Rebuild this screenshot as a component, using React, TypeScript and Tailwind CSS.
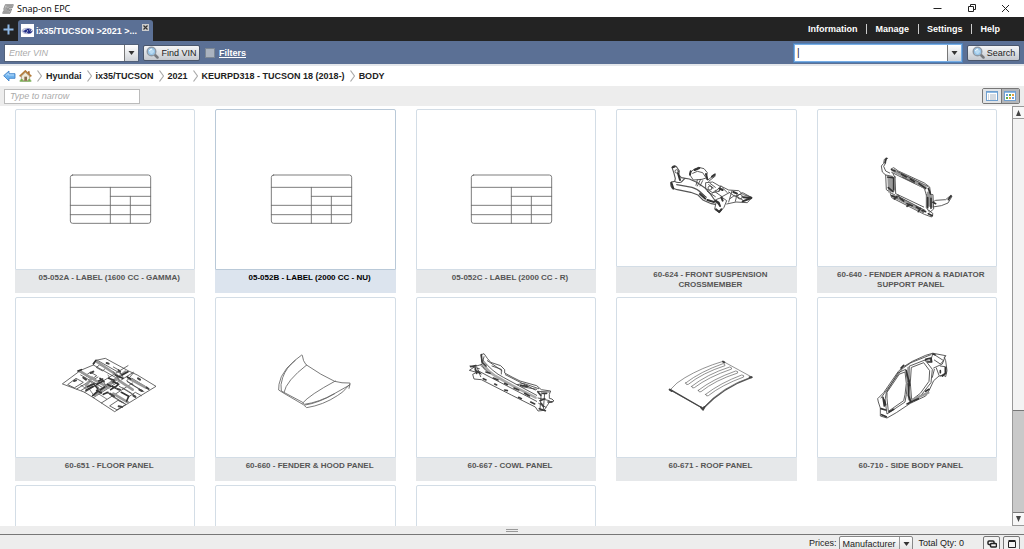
import { Fragment, useId, type ReactNode } from 'react';

function Caret() {
  return (
    <svg width="7" height="4" viewBox="0 0 7 4" aria-hidden="true">
      <path d="M0.5 0h6L3.5 4z" fill="#333" />
    </svg>
  );
}

function Magnifier() {
  return (
    <svg width="13" height="13" viewBox="0 0 26 26" aria-hidden="true">
      <path d="M17 17l6 6" stroke="#77797d" strokeWidth="5" strokeLinecap="round" />
      <circle cx="11" cy="11" r="8.5" fill="#b9dbf3" stroke="#8d97a3" strokeWidth="3" />
      <circle cx="11" cy="11" r="6" fill="none" stroke="#7db4df" strokeWidth="1.5" />
      <path d="M7 10q1-4 5-4" stroke="#fff" strokeWidth="2" fill="none" />
    </svg>
  );
}

function HyundaiMark() {
  return (
    <svg width="13" height="13" viewBox="0 0 39 39" className="shrink-0" aria-hidden="true">
      <rect width="39" height="39" fill="#fff" />
      <ellipse cx="19" cy="21" rx="16" ry="8" fill="#e3e7f0" stroke="#8b94bd" strokeWidth="2" />
      <path d="M11 25q6-2 8-9h5q-2 4-1 6h3q2-4 4-6M7 22q6 0 9-5M18 26q2-4 8-4l-3 5q6 0 9-5" fill="none" stroke="#1f2a86" strokeWidth="3.6" />
    </svg>
  );
}

function AppMark() {
  return (
    <svg width="12" height="10" viewBox="0 0 36 30" aria-hidden="true">
      <path d="M10 2h24l-3 9H20l-2 4h11l-5 13H2l3-8h11l2-4H5z" fill="#ccc" stroke="#666" strokeWidth="2" />
      <path d="M13 6h17M10 12h7M19 19h6M6 24h17" stroke="#555" strokeWidth="2" />
    </svg>
  );
}

function BackArrow() {
  return (
    <svg width="13" height="12" viewBox="0 0 39 36" aria-hidden="true">
      <path d="M2 17L18 3v8h18v14H18v8z" fill="#6fb3ee" stroke="#3f7fc6" strokeWidth="2.5" strokeLinejoin="round" />
      <path d="M8 17l8-7v5h17" stroke="#b9dcfa" strokeWidth="3" fill="none" />
    </svg>
  );
}

function HomeIcon() {
  return (
    <svg width="13" height="12" viewBox="0 0 39 36" aria-hidden="true">
      <path d="M2 33h35" stroke="#6aa544" strokeWidth="4" />
      <path d="M27 4h5v9h-5z" fill="#a0642c" />
      <path d="M7 18L19 7l13 11v14H7z" fill="#f0ead8" stroke="#8c7a5e" strokeWidth="2" />
      <path d="M2 19L19 3l18 16" fill="none" stroke="#b27a38" strokeWidth="5" />
      <path d="M16 20h8v12h-8z" fill="#8a6a48" />
      <path d="M5 27h6v6H5zM28 27h6v6h-6z" fill="#74b04a" />
    </svg>
  );
}

function Chevron() {
  return (
    <svg width="5" height="12" viewBox="0 0 5 12" aria-hidden="true">
      <path d="M0.5 0.5l4 5.5-4 5.5" fill="none" stroke="#aaa" strokeWidth="1.2" />
    </svg>
  );
}

function Figure({ viewBox, children }: { viewBox: string; children: ReactNode }) {
  return (
    <svg viewBox={viewBox} width="178" height="150" fill="none" stroke="#444" strokeWidth="2.6" strokeLinejoin="round" strokeLinecap="round" aria-hidden="true">
      {children}
    </svg>
  );
}

function LabelFigure() {
  return (
    <Figure viewBox="48 -165 534 450">
      <g stroke="#6a6a6a">
        <rect x="211" y="30" width="241" height="145" rx="7" />
        <path d="M211 67h241M331 94h121M211 121h241M211 149h241M331 67v108M391 94v81" />
      </g>
    </Figure>
  );
}

function CrossmemberFigure() {
  return (
    <Figure viewBox="-99 -120 534 450">
      <path d="M66 52q6-8 14-1l8 12-2 12 8 8 24 4 22 10 24 16 18 20 14 20 12 12M66 52l6 18 4 16-2 8-10 2q-4 10 2 18l16 5 40 8 22 8 16 16 24 10 12 2M74 94q8 6 20 2l10-10M80 104q20 4 46 8 16 4 30 18l10 10" stroke="#555" strokeWidth="3.4" />
      <path d="M120 68l12-10 14-6 16 4 10 12-4 16-12 4-26 2-8-12zM128 70l14-6 16 4 8 12M142 90l-4 16M152 88l-10 20M158 92l-8 16M174 90l22-18M176 94l20-16M168 98l20-2 24 14-4 14-20 4-20-12zM176 104l14 10M212 108l24 12 30 2 14 12 26 8-14 16-34-2-28 6M212 108l-16 18 20 14 22-12M206 122l12-8 14 14M236 126l20 14 22-12 26 14M240 146l14-10 24 14M200 148l16-6 14 10-8 20-14 16-14-10 4-20zM262 130l-6 24M150 128l20 14M180 100l16 12M246 122l-10 34M172 124l24 16M186 130l12-10" />
      <path d="M68 52l6-2M84 70l6 20M64 98l6 18M134 60l14-6M122 64l-2 10M168 72l4 16M150 132l16 14M172 150l20 6M196 152l10 6 4 10M198 178l10 8 6-8M280 142l24 2-26 10M208 116l10 4M214 142l4 10M250 126l10 4M186 80l8-6" stroke="#333" strokeWidth="6" />
      <circle cx="180" cy="114" r="6" />
      <circle cx="270" cy="140" r="7" />
      <circle cx="80" cy="64" r="5" />
    </Figure>
  );
}

function RadiatorSupportFigure() {
  return (
    <Figure viewBox="-127 -105 534 450">
      <path d="M82 40l-10 3-2 12-7 8 3 18 10 9 20 4M76 54l-6 10 6 14 12 6M92 72l8-4 14 10 78 36 16 12 4 28M94 82l20 10 78 38 6 20M76 90l2 44 14 10 12 6M104 94l2 50M90 146l4 12 98 50 22 8 4-10-12-10M106 146l84 40M198 150v38l10 14 12-10-2-42zM216 172l10-6 30-2 12-10 7 0-12 20-20 8-26 4" />
      <path d="M98 76l16 8 40 20 44 26M86 96l2 46M96 96l2 44M94 152l24 10 30 16 24 12 20 12M204 140l2 44M212 150v36" stroke="#999" strokeWidth="10" strokeLinecap="butt" />
      <path d="M78 40l-4 13M94 74l10 4M82 96l16 2M84 128l14 12M100 100v34M94 152l16 6M120 160l10 8M140 176l16 6M168 186l10 6M186 196l10 4M124 88l14 8M150 102l12 8M176 116l20 14M202 158v30M212 160v30M204 206l12 6M272 152l-8 12M110 154l-8 8M148 178l-8 6M180 190l-6 10M204 130l6 16M218 172l8 4" stroke="#333" strokeWidth="5" />
      <path d="M112 80l90 44M110 152l84 44M126 96l36 18M114 150l6 12M176 188l12 14M98 86l6 12" />
    </Figure>
  );
}

function FloorFigure() {
  return (
    <Figure viewBox="-102 -141 534 450">
      <path d="M38 116L92 76 130 60 138 46 166 40 236 78 262 90 318 124 194 200 130 158 104 142zM54 118l24-18 22 12-26 16zM84 78l46 26 14-8M92 90l70 40 40-26M130 60l68 38M142 46l74 42M104 142l130-80M130 158l120-76M154 174l94-60M80 132l30-18M94 136l32-20M170 142l52 32M180 182l24-16 24 12-26 16zM208 124l50 30M232 110l50 30M246 100l46 28M238 154l18-12 18 10M250 84l-20 24 20 12M122 82l18 10-14 10-18-10zM150 60l18 8-10 10-18-10zM190 66l18 10M270 118l20 10" strokeWidth="2.4" />
      <path d="M92 80l44 26 40 22M140 50l60 40M226 80l-60 50M236 100l52 28M136 150l56-42M144 140l70-50M190 146l44 26M206 106l42 28M126 98l-18 24" stroke="#999" strokeWidth="8" />
      <path d="M84 78l10-4M130 56l8-10M196 90l22 10M108 136l22-12M140 118l20-10M112 126l20-10M146 108l12-6M128 152l16-14M152 134l12-8M140 136l14 8M190 110l16 8-8 6M160 148l14-6M182 134l12-8M214 142l22 12-6 14M176 100l16 6M134 120l10 12M216 90l18-10M150 100l12 10M186 124l12 6M172 118l10 6M232 96l10 6" stroke="#333" strokeWidth="5" />
      <path d="M72 108l6-2M122 84l8-4M202 132l8 2M250 152l6 4M170 54l6 2M206 76l4 4M264 100l6 4M290 128l6 4M206 184l10 2M100 98l8 6M180 146l12 8M268 134l8 4" strokeWidth="6" />
      <path d="M118 132l14 20M136 114l18 26M156 102l14 24M174 90l16 26M190 80l18 26M206 74l14 24M92 120l18 12M118 108l16 10M148 148l22 14M186 154l30 18M218 128l26 16M244 118l26 16" strokeWidth="2" />
    </Figure>
  );
}

function HoodFigure() {
  return (
    <Figure viewBox="-131 -141 534 450">
      <g stroke="#666">
        <path d="M122 31l-18 14q-30 24-42 50-10 26-8 40l16 10 58 34 10 9q50-8 92-36 20-12 26-22l11-12q3-6-1-4-22 1-44-5-40-18-86-50-9-10-11-27z" />
        <path d="M104 46q-28 22-38 52-8 22-4 40l64 34 5 6q44-6 90-32l46-26M70 142q6-34 68-82M126 174q20-24 98-66M134 180q40-6 88-34M268 118l-3 12" />
      </g>
    </Figure>
  );
}

function CowlFigure() {
  return (
    <Figure viewBox="-115 -126 534 450">
      <path d="M78 44l8-3 10 14 10 12 30 10 12 12v10l22 12 24 12 50 14 14 12 28 4-4 10v12l8 2 6 6-14 4-8 12-8 12-18 2-8-12-72-36-90-46-22-2-4-14 12-6-22-6 18-12 20-6z" />
      <path d="M82 60q30 36 62 52l100 54M76 76q20 22 50 36l116 62M68 92l30 16 146 76M86 50l-6 24 8 14 20 12M96 62l44 30M44 78l28 8M58 90l20 12M150 104l90 46M186 134l18-4 46 16M200 140l44 8M246 154l36 2M248 174l34 8M250 190l22 12M258 158l-4 50M268 160l-4 48M66 84l10 26M110 78l28 10v14" />
      <path d="M84 74q14 20 36 34l50 28 70 36" stroke="#aaa" strokeWidth="8" />
      <path d="M78 44l2 22 12 12M46 80l16-3M64 94l10 6M92 96l12 4M114 114l14 6M148 130l8 4M176 144l14 6M208 160l14 8M84 116l8 4M118 132l6 3M148 150l8 2M190 172l8 4M226 186l12 6M196 136l20 3M248 156l8 10M254 182l14-6M278 186l12 0M252 206l18 6M262 160l12 0M60 86l4 14M258 190l6 10" stroke="#3c3c3c" strokeWidth="5" />
    </Figure>
  );
}

function RoofFigure() {
  return (
    <Figure viewBox="-114 -156 534 450">
      <g stroke="#6a6a6a" strokeWidth="2.2">
        <path d="M46 119q18-22 44-36 50-30 114-49l86 47q-88 28-146 93z" />
        <path d="M92 99q44-34 112-58 6 0 6 6-68 22-110 56-6 4-8-4zM110 109q46-36 114-58 6 0 6 6-70 24-112 56-6 4-8-4zM130 121q44-34 112-58 8 0 6 6-68 22-110 56-6 4-8-4zM152 133q44-34 108-58 8 0 6 6-66 24-106 56-6 4-8-4z" />
      </g>
      <path d="M46 119l96 55" stroke="#444" strokeWidth="4" />
      <path d="M146 174q58-62 144-92" stroke="#555" strokeWidth="4" />
      <path d="M44 119l6 4M138 172l6 7 4-8M284 82l6 0M204 35l4 2" strokeWidth="6" />
    </Figure>
  );
}

function SideBodyFigure() {
  return (
    <Figure viewBox="-127 -126 534 450">
      <path d="M216 40l-20 6-40 18-26 16-16 14-44 64-18 18 2 10 6 18 0 24 20 6 28-16 42-28 46-22 10-16 14-30 16-14 14-2 6 4 4-18-4-30-4-10 4-4z" />
      <path d="M118 102l16-6 4 34-4 34-4 18-46 32-4-38 0-18zM114 98l22-10 6 40-4 36-4 22-54 36-6-42 4-22zM154 82l36-14 18 24-2 32-26 36-26 20-4-50zM148 78l46-18 22 28-4 40-30 38-32 22-4-56zM212 44l-60 24-26 18-54 74-10 14M218 40l-8 24-16-2M222 44l28 18-10 10-18-12M254 50l-8 22-26 12M240 78l14 2v20l-14 8M228 84l8 22M222 88l-6 24" />
      <path d="M144 84l2 50v44M150 182l54-24" stroke="#999" strokeWidth="7" />
      <path d="M138 92l8 34-2 40 6 16M68 172l4 26M62 206l14 4M64 224l14 6M196 58l16-4 2 12-12 0M130 76l-8 8M140 192l16-8M72 180l4 14M196 154l10-6M256 82v18l-10 8M240 92l0 6M86 216l14-8M146 120l2 16M218 42l6 2M160 182l14-6" stroke="#333" strokeWidth="5" />
    </Figure>
  );
}

type Part = { title: string; figure: ReactNode; active?: boolean };

const parts: Part[] = [
  { title: '05-052A - LABEL (1600 CC - GAMMA)', figure: <LabelFigure /> },
  { title: '05-052B - LABEL (2000 CC - NU)', figure: <LabelFigure />, active: true },
  { title: '05-052C - LABEL (2000 CC - R)', figure: <LabelFigure /> },
  { title: '60-624 - FRONT SUSPENSION CROSSMEMBER', figure: <CrossmemberFigure /> },
  { title: '60-640 - FENDER APRON & RADIATOR SUPPORT PANEL', figure: <RadiatorSupportFigure /> },
  { title: '60-651 - FLOOR PANEL', figure: <FloorFigure /> },
  { title: '60-660 - FENDER & HOOD PANEL', figure: <HoodFigure /> },
  { title: '60-667 - COWL PANEL', figure: <CowlFigure /> },
  { title: '60-671 - ROOF PANEL', figure: <RoofFigure /> },
  { title: '60-710 - SIDE BODY PANEL', figure: <SideBodyFigure /> },
  { title: '', figure: null },
  { title: '', figure: null },
  { title: '', figure: null },
];

function PartCard({ title, figure, active }: Part) {
  return (
    <button type="button" className="flex h-[184px] flex-col text-center">
      <span className={`flex w-full flex-1 justify-center overflow-hidden rounded-t-xs border bg-white ${active ? 'border-[#b9c9d8]' : 'border-[#d3dde6]'}`}>
        {figure}
      </span>
      <span className={`block min-h-[23px] w-full py-[3px] pr-3 pl-5 text-[8px] leading-[10px] font-bold ${active ? 'bg-[#dce4ee] text-black' : 'bg-[#e6e8ea] text-[#555]'}`}>
        {title}
      </span>
    </button>
  );
}

const crumbs = ['Hyundai', 'ix35/TUCSON', '2021', 'KEURPD318 - TUCSON 18 (2018-)', 'BODY'];
const menu = ['Information', 'Manage', 'Settings', 'Help'];

export default function App() {
  const id = useId();
  return (
    <div className="flex h-screen flex-col overflow-hidden bg-white font-['Liberation_Sans',Arial,sans-serif] text-[9px] leading-3 text-[#222]">
      <header className="flex h-[17px] shrink-0 items-center pr-[14px] pl-[2px]">
        <AppMark />
        <h1 className="ml-[3px] font-['Open_Sans',sans-serif] text-[9px] text-black">Snap-on EPC</h1>
        <div className="ml-auto flex items-center gap-[25px]">
          <button type="button" aria-label="Minimize">
            <svg width="9" height="9" viewBox="0 0 9 9"><path d="M0.5 4.5h8" stroke="#222" /></svg>
          </button>
          <button type="button" aria-label="Restore">
            <svg width="9" height="9" viewBox="0 0 9 9" fill="none" stroke="#222"><path d="M1.5 2.5h5v5h-5zM3.5 2V0.500h5v5H7" /></svg>
          </button>
          <button type="button" aria-label="Close">
            <svg width="9" height="9" viewBox="0 0 9 9"><path d="M1 1l7 7M8 1L1 8" stroke="#222" /></svg>
          </button>
        </div>
      </header>

      <div className="flex h-6 shrink-0 items-center bg-[#232323] pr-6">
        <button type="button" aria-label="New tab" className="ml-[3px] flex w-[15px]">
          <svg width="11" height="11" viewBox="0 0 11 11"><path d="M5.500 0.500v10M0.500 5.500h10" stroke="#8fb9e6" strokeWidth="2" /></svg>
        </button>
        <div className="flex h-[21px] w-[135px] items-center gap-[2px] self-end rounded-t-[3px] bg-[#5b7095] pr-1 pl-[3px] font-bold text-white">
          <HyundaiMark />
          <span className="whitespace-nowrap">ix35/TUCSON &gt;2021 &gt;...</span>
          <button type="button" aria-label="Close tab" className="mt-1 ml-auto flex self-start">
            <svg width="7" height="7" viewBox="0 0 7 7"><rect width="7" height="7" fill="#ccc" /><path d="M1.500 1.500l4 4M5.500 1.500l-4 4" stroke="#333" strokeWidth="1.200" /></svg>
          </button>
        </div>
        <nav className="ml-auto flex items-center font-bold text-white">
          {menu.map((item, i) => (
            <Fragment key={item}>
              {i > 0 && <span className="mr-2 ml-[9px] h-[10px] w-px bg-[#ccc]" />}
              <a href="#">{item}</a>
            </Fragment>
          ))}
        </nav>
      </div>

      <div className="flex h-[23px] shrink-0 items-center bg-[#5b7095] px-1">
        <div className="flex h-[18px] w-[135px] border border-[#52617a] bg-white">
          <input aria-label="Enter VIN" placeholder="Enter VIN" className="min-w-0 flex-1 px-1 italic outline-none placeholder:text-[#aaa]" />
          <button type="button" aria-label="VIN history" className="flex w-[14px] items-center justify-center border-l border-[#777] bg-linear-to-b from-white to-[#cfd3d8]">
            <Caret />
          </button>
        </div>
        <button type="button" className="ml-1 flex h-4 w-[57px] items-center justify-center gap-[2px] rounded-xs border border-[#4a566b] bg-linear-to-b from-[#f4f5f6] to-[#c4c8ce]">
          <Magnifier />
          Find VIN
        </button>
        <input id={`${id}-filters`} type="checkbox" className="mr-1 ml-[5px] size-[10px] appearance-none border border-[#7c8794] bg-[#aab3c0]" />
        <label htmlFor={`${id}-filters`} className="font-bold text-white underline">Filters</label>
        <div className="ml-auto flex h-[18px] w-[168px] border border-[#78aee6] bg-white ring-1 ring-[#4f82ba]">
          <input aria-label="Search parts" defaultValue="|" className="min-w-0 flex-1 px-[2px] text-[10px] outline-none" />
          <button type="button" aria-label="Search history" className="flex w-[14px] items-center justify-center border-l border-[#777] bg-linear-to-b from-white to-[#cfd3d8]">
            <Caret />
          </button>
        </div>
        <button type="button" className="ml-[5px] flex h-4 w-[53px] items-center justify-center gap-[2px] rounded-xs border border-[#4a566b] bg-linear-to-b from-[#f4f5f6] to-[#c4c8ce]">
          <Magnifier />
          Search
        </button>
      </div>

      <nav aria-label="Breadcrumb" className="flex h-[22px] shrink-0 items-center border-t-2 border-[#e4e7eb] pl-[3px] font-bold">
        <button type="button" aria-label="Back"><BackArrow /></button>
        <a href="#" aria-label="Home" className="ml-[3px]"><HomeIcon /></a>
        {crumbs.map((crumb) => (
          <Fragment key={crumb}>
            <span className="mr-1 ml-[5px]"><Chevron /></span>
            <a href="#">{crumb}</a>
          </Fragment>
        ))}
      </nav>

      <div className="flex h-5 shrink-0 items-center justify-between bg-[#ededed] px-1">
        <input aria-label="Type to narrow" placeholder="Type to narrow" className="h-[15px] w-[136px] border border-[#bbb] bg-white px-[5px] italic outline-none placeholder:text-[#aaa]" />
        <div className="flex h-4 w-[38px] overflow-hidden rounded-xs border border-[#777]">
          <button type="button" aria-label="List view" className="flex flex-1 items-center justify-center bg-[#e2e4e6]">
            <svg width="12" height="10" viewBox="0 0 12 10"><rect x="0.500" y="0.500" width="11" height="9" fill="#fff" stroke="#6f9fcf" /><path d="M1 1.500h10" stroke="#8fbbe4" /><path d="M2 4h1M4 4h6M2 6h1M4 6h6M2 8h1M4 8h6" stroke="#aab6c4" /></svg>
          </button>
          <button type="button" aria-label="Thumbnail view" className="flex flex-1 items-center justify-center border-l border-[#777] bg-[#b4b6b9]">
            <svg width="12" height="10" viewBox="0 0 12 10"><rect x="0.500" y="0.500" width="11" height="9" fill="#fff" stroke="#6f9fcf" /><path d="M1 1.500h10" stroke="#8fbbe4" /><path d="M2 3h2v2H2zM8 6h2v2H8z" fill="#6aa0dc" /><path d="M5 3h2v2H5zM2 6h2v2H2z" fill="#5caf50" /><path d="M8 3h2v2H8zM5 6h2v2H5z" fill="#e8a33a" /></svg>
          </button>
        </div>
      </div>

      <main className="flex min-h-0 flex-1">
        <div className="grid min-w-0 flex-1 grid-cols-5 content-start gap-x-5 gap-y-1 overflow-hidden px-[15px] pt-[3px]">
          {parts.map((part, i) => (
            <PartCard key={i} {...part} />
          ))}
        </div>
        <div className="flex w-3 flex-col border border-r-0 border-[#999] bg-[#f3f3f3]">
          <button type="button" aria-label="Scroll up" className="flex h-3 items-center justify-center border-b border-[#999] bg-[#f7f7f7]">
            <svg width="5" height="6" viewBox="0 0 5 6"><path d="M2.500 0L5 6H0z" fill="#444" /></svg>
          </button>
          <div className="grow-[29]" />
          <div className="grow-[10] border-y border-[#777] bg-[#c9c9c9]" />
          <button type="button" aria-label="Scroll down" className="flex h-3 items-center justify-center bg-[#f7f7f7]">
            <svg width="5" height="6" viewBox="0 0 5 6"><path d="M2.500 6L5 0H0z" fill="#444" /></svg>
          </button>
        </div>
      </main>

      <div className="flex h-2 shrink-0 items-center justify-center bg-[#ededed]">
        <span className="h-[3px] w-3 border-y border-[#999]" />
      </div>

      <footer className="flex h-[15px] shrink-0 items-start overflow-hidden border-t border-[#777] bg-[#ededed] pt-px pr-1">
        <label htmlFor={`${id}-prices`} className="mt-px ml-auto">Prices:</label>
        <div className="ml-[3px] grid h-4 w-[74px] rounded-xs border border-[#888] bg-linear-to-b from-white to-[#e0e0e0]">
          <select id={`${id}-prices`} className="col-start-1 row-start-1 appearance-none pl-[2px] outline-none">
            <option>Manufacturer</option>
          </select>
          <span className="pointer-events-none col-start-1 row-start-1 flex w-[13px] items-center justify-center justify-self-end border-l border-[#999]">
            <Caret />
          </span>
        </div>
        <span className="mt-px mr-[19px] ml-[5px]">Total Qty: 0</span>
        <button type="button" aria-label="Cascade windows" className="flex h-4 w-[17px] items-center justify-center rounded-xs border border-[#777] bg-[#f2f2f2]">
          <svg width="10" height="8" viewBox="0 0 10 8" fill="none" stroke="#222" strokeWidth="1.500"><rect x="1" y="1" width="6" height="3.500" rx="1" /><rect x="3.500" y="3.500" width="6" height="3.500" rx="1" fill="#f2f2f2" /></svg>
        </button>
        <button type="button" aria-label="Maximize panel" className="ml-[3px] flex h-4 w-[17px] items-center justify-center rounded-xs border border-[#777] bg-[#f2f2f2]">
          <svg width="8" height="8" viewBox="0 0 8 8" fill="none" stroke="#222"><path d="M0.500 1.500h7v6h-7zM0.500 0.500h7" /></svg>
        </button>
      </footer>
    </div>
  );
}
